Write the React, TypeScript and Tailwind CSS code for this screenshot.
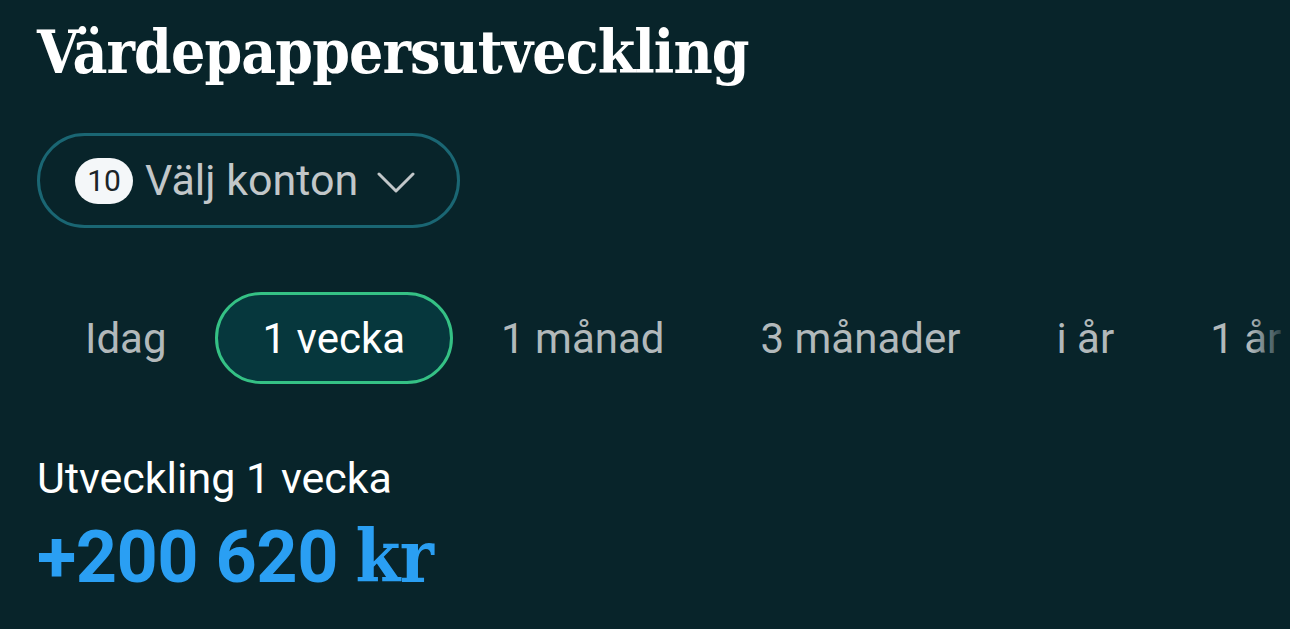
const periods = ["Idag", "1 vecka", "1 månad", "3 månader", "i år", "1 år"];

export default function App() {
  const active = "1 vecka";

  return (
    <div className="w-[1290px] h-[629px] overflow-hidden bg-[#08242a] font-['Roboto',sans-serif]">
      <div className="pl-[37px] pt-[14px]">
        <h1 className="text-[60px] leading-[76px] font-bold text-white font-['DejaVu_Serif_Condensed','DejaVu_Serif',serif] tracking-[-0.9px]">
          Värdepappersutveckling
        </h1>

        <button className="mt-[43px] h-[95px] w-[423px] flex items-center rounded-full border-[3px] border-[#1a6673] pl-[35px]">
          <span className="h-[46px] w-[58px] rounded-full bg-[#f4f7f9] text-[#1b2428] text-[30px] flex items-center justify-center">
            10
          </span>
          <span className="ml-[12px] text-[43px] text-[#c2c7c9]">Välj konton</span>
          <svg className="ml-[19px] mt-[4px]" width="38" height="22" viewBox="0 0 38 22" fill="none">
            <polyline points="2,2 19,19 36,2" stroke="#c2c7c9" strokeWidth="3" strokeLinecap="round" strokeLinejoin="round" />
          </svg>
        </button>

        <div className="relative mt-[64px] flex whitespace-nowrap">
          {periods.map((p) => (
            <div
              key={p}
              className={
                p === active
                  ? "h-[92px] px-[45px] flex items-center rounded-full border-[3px] border-[#35c185] bg-[#06373d] text-white text-[42px]"
                  : "h-[92px] px-[45px] flex items-center rounded-full border-[3px] border-transparent text-[#b2b9bb] text-[42px]"
              }
            >
              {p}
            </div>
          ))}
          <div className="absolute right-0 top-0 h-full w-[40px] bg-gradient-to-r from-transparent to-[#08242a]" />
        </div>

        <p className="mt-[70px] text-[43px] leading-[48px] text-white">Utveckling 1 vecka</p>
        <p className="mt-[17px] text-[72px] leading-[76px] font-bold text-[#2a9ff3] tracking-[-0.5px]">
          +200 620{" "}
          <span className="font-['DejaVu_Serif_Condensed','DejaVu_Serif',serif]">kr</span>
        </p>
      </div>
    </div>
  );
}
